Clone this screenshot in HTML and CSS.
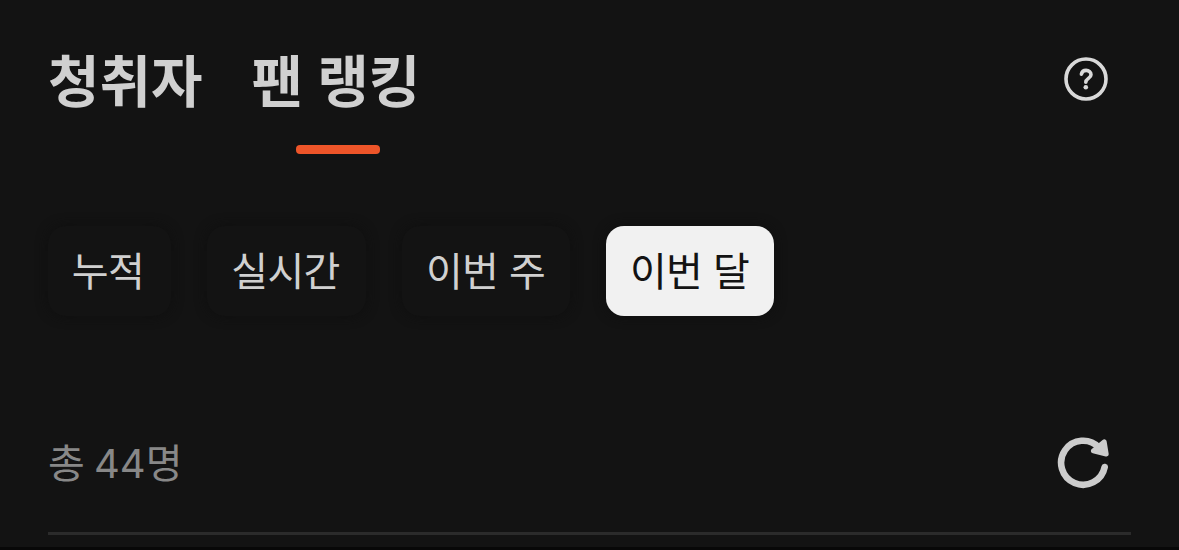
FILE: index.html
```html
<!DOCTYPE html>
<html lang="ko">
<head>
<meta charset="utf-8">
<title>팬 랭킹</title>
<link rel="stylesheet" href="styles.css">
</head>
<body>
<main class="panel">
  <header class="header">
    <nav class="tabs">
      <a class="tab">청취자</a>
      <a class="tab tab-active">팬 랭킹</a>
    </nav>
    <svg class="help" viewBox="0 0 44 44" fill="none" stroke="#d9d9d9">
      <circle cx="22" cy="22" r="20" stroke-width="3.6"/>
      <path d="M17.400 17.200c.5-2.500 2.200-3.800 4.700-3.800 2.800 0 4.900 1.600 4.900 4.300 0 3.700-5.200 3.700-5.200 7.500" stroke-width="3.600" stroke-linecap="round"/>
      <circle cx="21.800" cy="30.200" r="2.300" fill="#d9d9d9" stroke="none"/>
    </svg>
  </header>
  <div class="filters">
    <button class="chip chip-short">누적</button>
    <button class="chip chip-medium">실시간</button>
    <button class="chip">이번 주</button>
    <button class="chip chip-active">이번 달</button>
  </div>
  <div class="summary">
    <span class="count">총 <span class="number">44</span>명</span>
    <svg class="refresh" viewBox="0 0 52 52">
      <path d="M42 10.500A22 22 0 1 0 47.700 30" fill="none" stroke="#ccc" stroke-width="6.600" stroke-linecap="round"/>
      <path d="M47.200 4.800l2 12.300-12.800-3.200z" fill="#ccc" stroke="#ccc" stroke-width="5" stroke-linejoin="round"/>
    </svg>
  </div>
</main>
</body>
</html>
```
FILE: styles.css
```css
* { box-sizing: border-box; }
body { margin: 0; background: #131313; font-family: "Noto Sans CJK KR", sans-serif; color: #d0d0d0; }
.panel { height: 550px; padding: 42px 48px 0; border-bottom: 3px solid #080808; overflow: hidden; }
.header { display: flex; justify-content: space-between; height: 184px; }
.tabs { display: flex; gap: 49px; }
.tab { font-size: 56px; font-weight: 700; line-height: 72px; height: 112px; white-space: nowrap; word-spacing: -1.5px; }
.tab-active::after { content: ""; display: block; width: 84px; height: 9px; margin: 31px 0 0 44px; border-radius: 4px; background: #ee5529; }
.help { width: 44px; height: 44px; margin: 15px 23px 0 0; }
.filters { display: flex; gap: 36px; height: 90px; }
.chip { width: 168px; border: 0; padding: 0 1px 4px 0; height: 90px; border-radius: 18px; background: #131313; color: #d0d0d0; font: 400 40px/86px "Noto Sans CJK KR", sans-serif; letter-spacing: -0.6px; box-shadow: 0 0 12px #0f0f0f; white-space: nowrap; }
.chip-short { width: 123px; padding-right: 3px; }
.chip-medium { width: 159px; padding-right: 2px; }
.chip-active { background: #f1f1f1; color: #131313; }
.summary { display: flex; justify-content: space-between; margin-top: 94px; height: 125px; border-bottom: 3px solid #2b2b2b; }
.count { font-size: 40px; line-height: 102px; color: #888; word-spacing: -2px; }
.number { font-family: Inter, sans-serif; }
.refresh { width: 52px; height: 52px; margin: 27px 22px 0 0; }
```
